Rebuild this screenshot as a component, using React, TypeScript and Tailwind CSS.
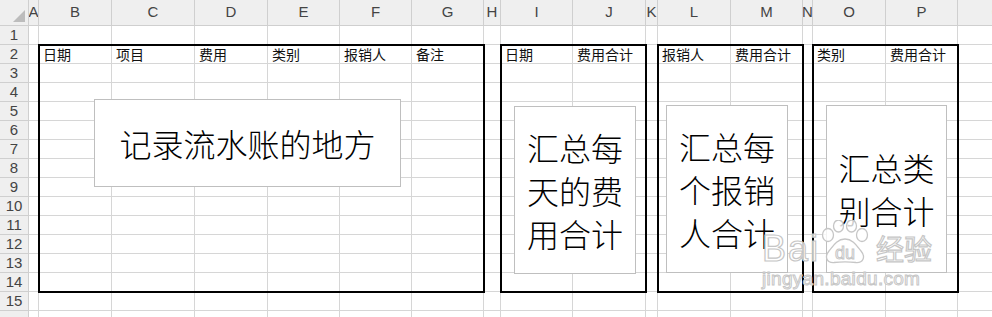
import React from "react";

const COLS = ["A", "B", "C", "D", "E", "F", "G", "H", "I", "J", "K", "L", "M", "N", "O", "P", "Q"];
const ROW2: Record<string, string> = {
  B: "日期",
  C: "项目",
  D: "费用",
  E: "类别",
  F: "报销人",
  G: "备注",
  I: "日期",
  J: "费用合计",
  L: "报销人",
  M: "费用合计",
  O: "类别",
  P: "费用合计",
};

const GRID =
  "grid grid-cols-[29px_10px_73px_83px_73px_72px_72px_72px_17px_72px_73px_12px_73px_72px_10px_73px_72px_80px] grid-rows-[26px_repeat(16,19px)]";

function Paw() {
  return (
    <svg width="48" height="44" viewBox="0 0 48 44">
      <g fill="rgba(255,255,255,0.8)" stroke="#c6c6c6" strokeWidth="1.3">
        <ellipse cx="7" cy="15" rx="5.5" ry="6.5" />
        <ellipse cx="17.5" cy="6" rx="5" ry="6" />
        <ellipse cx="30.5" cy="6" rx="5" ry="6" />
        <ellipse cx="41" cy="15" rx="5.5" ry="6.5" />
        <path d="M24 19 C16 19 12 26 8 31 C3 37 6 43 13 42.5 C18 42 30 42 35 42.5 C42 43 45 37 40 31 C36 26 32 19 24 19 Z" />
      </g>
      <text
        x="24"
        y="39"
        textAnchor="middle"
        fontFamily="Liberation Sans, Arial, sans-serif"
        fontSize="18"
        fill="rgba(255,255,255,0.9)"
        stroke="#c6c6c6"
        strokeWidth="1"
      >
        du
      </text>
    </svg>
  );
}

export default function App() {
  const rows = Array.from({ length: 16 }, (_, i) => i + 1);
  return (
    <div className="relative w-[992px] h-[317px] overflow-hidden bg-white font-['Noto_Sans_CJK_SC',sans-serif]">
      <div className={GRID}>
        <div className="relative bg-[#efefef] border-r border-b border-[#cfcfcf]">
          <svg className="absolute right-[3px] bottom-[3px]" width="12" height="12" viewBox="0 0 12 12">
            <polygon points="12,0 12,12 0,12" fill="#bcbcbc" />
          </svg>
        </div>
        {COLS.map((c) => (
          <div
            key={c}
            className="flex items-center justify-center bg-[#efefef] border-r border-b border-[#cfcfcf] text-[15px] text-[#444] font-['Liberation_Sans',sans-serif] overflow-hidden"
          >
            {c}
          </div>
        ))}
        {rows.map((r) => (
          <React.Fragment key={r}>
            <div className="flex items-center justify-center bg-[#efefef] border-r border-b border-[#cfcfcf] text-[15px] text-[#444] font-['Liberation_Sans',sans-serif]">
              {r <= 15 ? r : ""}
            </div>
            {COLS.map((c) => (
              <div
                key={c}
                className="flex items-center pl-[4px] border-r border-b border-[#d6d6d6] text-[14px] leading-none text-[#111] whitespace-nowrap overflow-visible"
              >
                {r === 2 ? ROW2[c] ?? "" : ""}
              </div>
            ))}
          </React.Fragment>
        ))}
      </div>

      {/* thick cell borders */}
      <div className={"absolute inset-0 pointer-events-none " + GRID}>
        <div className="col-start-3 col-end-9 row-start-3 row-end-16 -m-px border-2 border-black" />
        <div className="col-start-10 col-end-12 row-start-3 row-end-16 -m-px border-2 border-black" />
        <div className="col-start-13 col-end-15 row-start-3 row-end-16 -m-px border-2 border-black" />
        <div className="col-start-16 col-end-18 row-start-3 row-end-16 -m-px border-2 border-black" />
      </div>

      {/* text box shapes */}
      <div className="absolute left-[94px] top-[99px] w-[307px] h-[88px] bg-white border border-[#bfbfbf] flex items-center justify-center text-[32px] font-light leading-none text-black">
        记录流水账的地方
      </div>
      <div className="absolute left-[514px] top-[106px] w-[122px] h-[168px] bg-white border border-[#bfbfbf] flex flex-col items-center justify-center text-[32px] font-light leading-[43px] text-black">
        <span>汇总每</span>
        <span>天的费</span>
        <span>用合计</span>
      </div>
      <div className="absolute left-[666px] top-[105px] w-[122px] h-[168px] bg-white border border-[#bfbfbf] flex flex-col items-center justify-center text-[32px] font-light leading-[43px] text-black">
        <span>汇总每</span>
        <span>个报销</span>
        <span>人合计</span>
      </div>
      <div className="absolute left-[826px] top-[105px] w-[121px] h-[168px] bg-white border border-[#bfbfbf] flex flex-col items-center justify-center text-[32px] font-light leading-[43px] text-black">
        <span>汇总类</span>
        <span>别合计</span>
      </div>

      {/* watermark overlay */}
      <span className="absolute left-[762px] top-[231px] font-['Liberation_Sans',sans-serif] text-[36px] leading-none text-white/80 [-webkit-text-stroke:1.2px_#c6c6c6] tracking-[2px] pointer-events-none">
        Bai
      </span>
      <div className="absolute left-[821px] top-[220px] pointer-events-none">
        <Paw />
      </div>
      <span className="absolute left-[876px] top-[234px] text-[28px] leading-none text-white/80 [-webkit-text-stroke:1.2px_#c6c6c6] pointer-events-none">
        经验
      </span>
      <span className="absolute left-[762px] top-[269px] font-['Liberation_Sans',sans-serif] text-[19px] leading-none text-white/80 [-webkit-text-stroke:1px_#c6c6c6] tracking-[0.3px] pointer-events-none">
        jingyan.baidu.com
      </span>
    </div>
  );
}
